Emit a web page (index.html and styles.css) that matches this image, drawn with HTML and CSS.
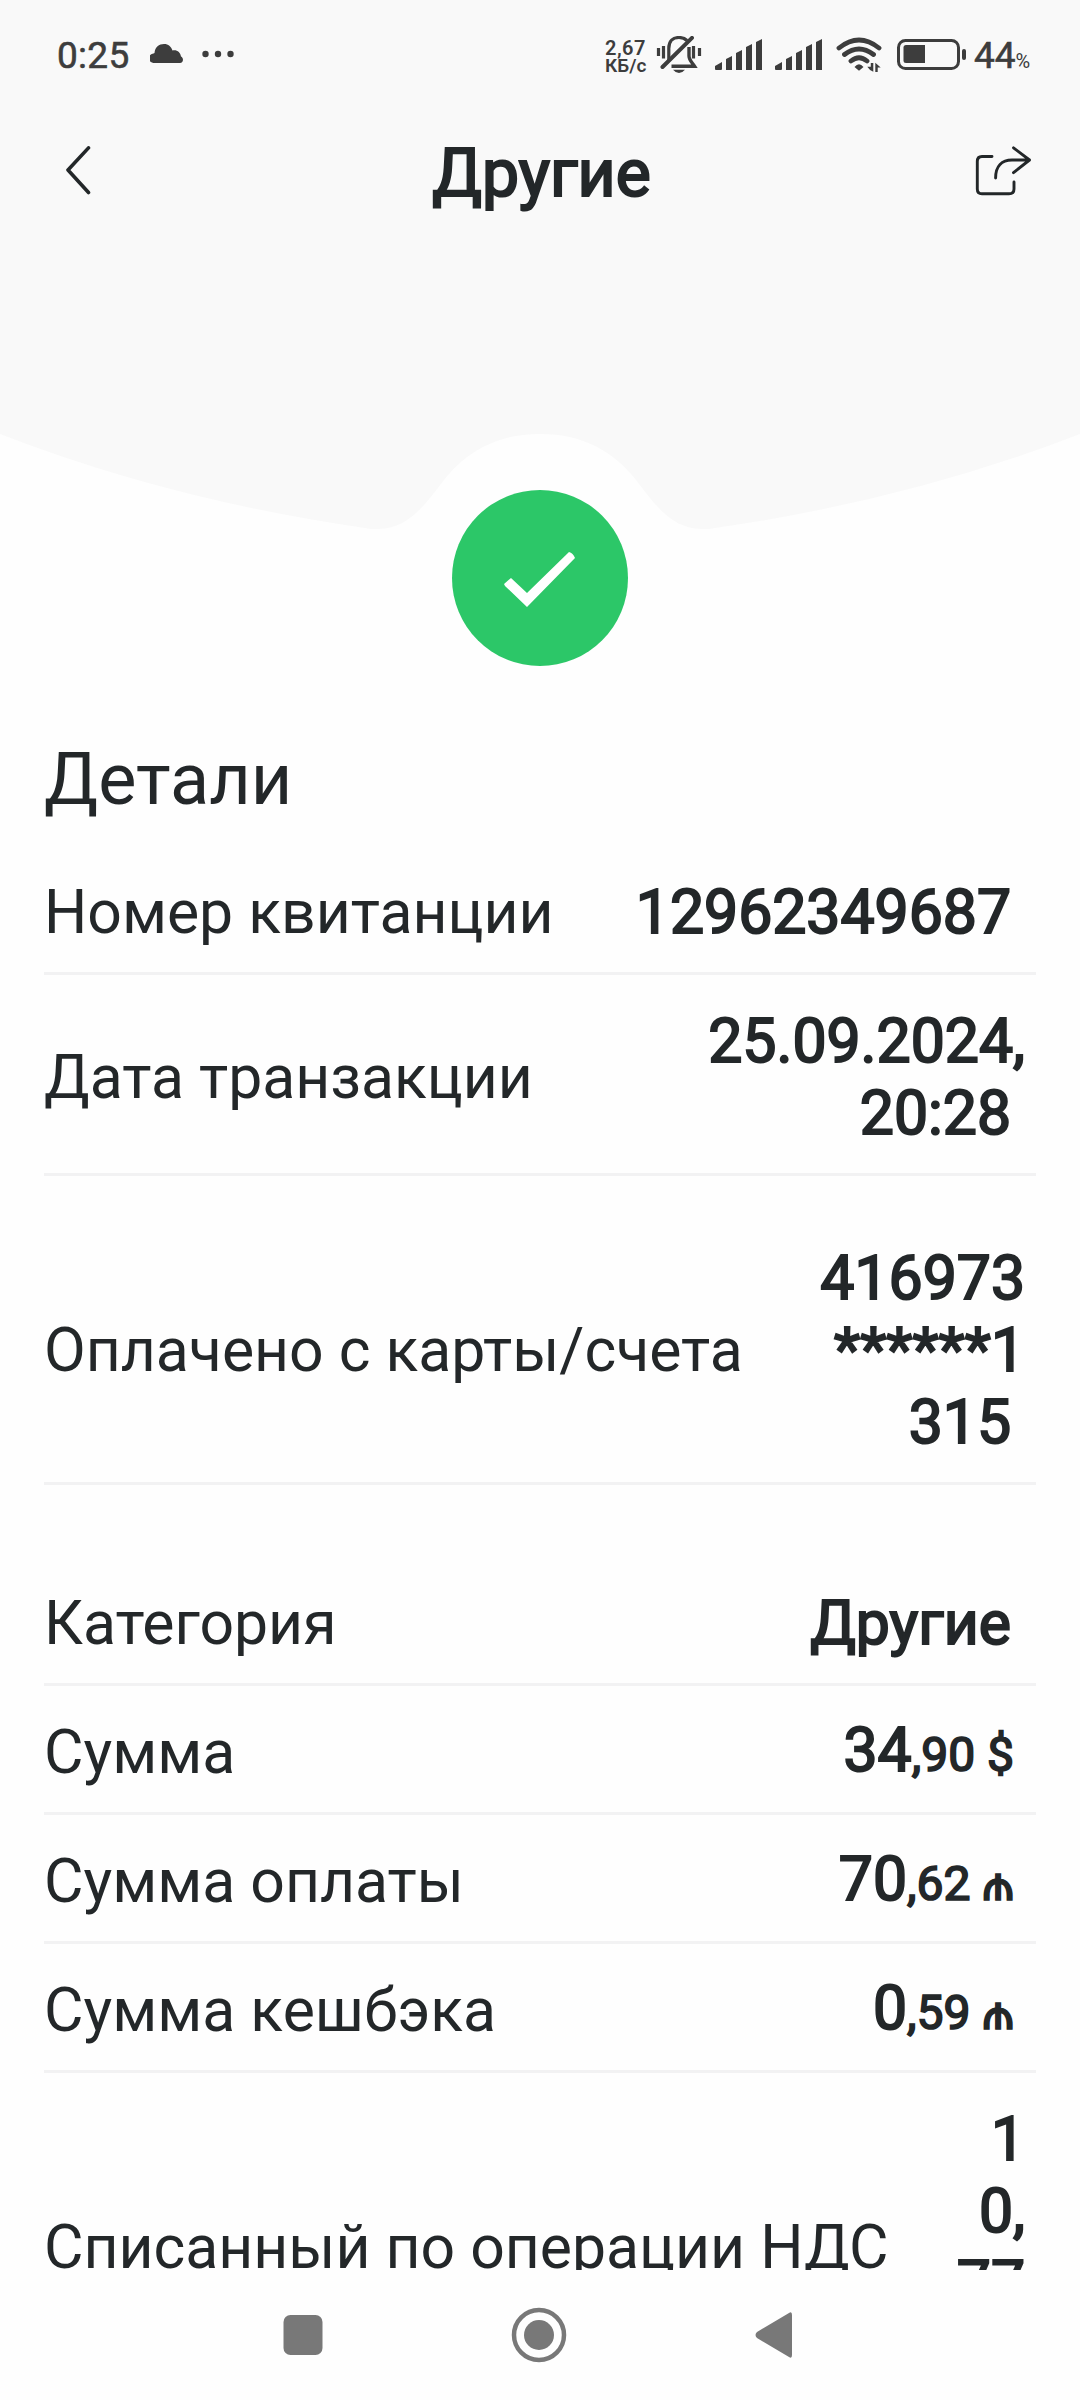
FILE: index.html
```html
<!DOCTYPE html>
<html lang="ru">
<head>
<meta charset="utf-8">
<title>Другие</title>
<link rel="stylesheet" href="styles.css">
</head>
<body>
<div class="screen">
  <header class="hero">
    <div class="status">
      <span class="clock">0:25</span>
      <svg class="cloud" width="33" height="19" viewBox="0 0 33 19"><path d="M4 19A4.500 4.500 0 0 1 3.500 9.500L4.500 9C5 3 9 0 14 0C18.500 0 21 2.500 22.500 6.500C27 5.500 30.500 8.500 31 12.500C34 14 33.500 19 30 19Z"/></svg>
      <svg class="dots" width="32" height="8" viewBox="0 0 32 8"><circle cx="3.500" cy="4" r="3.200"/><circle cx="16" cy="4" r="3.200"/><circle cx="28.500" cy="4" r="3.200"/></svg>
      <span class="speed"><span class="rate">2,67</span><span>КБ/с</span></span>
      <svg class="mute" width="46" height="40" viewBox="0 0 46 40">
        <g fill="none" stroke="#3d3d3d" stroke-width="3"><path d="M2.500 12v8M7.500 10v12.500M37.500 10v12.500M43.500 12v8M12.800 24V12.500C12.800 5 17 1.500 23 1.500C26 1.500 29 2.500 31 4.500" stroke-width="3.200"/><path d="M6.500 31L36 1.800" stroke-width="4" stroke-linecap="round"/><path d="M33 11V20C33 24 36 26.500 38.500 30.200H15.500" stroke-width="3.400"/></g>
        <path d="M17 33.700H29Q23 40.500 17 33.700Z"/>
      </svg>
      <svg class="signal" width="48" height="32" viewBox="0 0 48 32"><path id="bars" d="M0 30V27L7 23V30Q7 31 6 31H1Q0 31 0 30ZM11 31V20L17 17V31ZM21 31V14L27 11V31ZM31 31V8L37 5V31ZM41 31V3L47 0V31Z"/></svg>
      <svg class="signal" width="48" height="32" viewBox="0 0 48 32"><use href="#bars"/></svg>
      <svg class="wifi" width="46" height="37" viewBox="0 0 46 37">
        <g fill="none" stroke="#3d3d3d" stroke-width="4.800" stroke-linecap="round"><path d="M3 11Q23-5 43 11M8.500 17.500Q23 6.500 37.500 17.500M15 24Q23 17.500 31 24"/></g>
        <path d="M18.500 30Q23 24.500 27.500 30L23 33.800ZM31.300 29.800H34.800V26H37.300V34.800Q34 34 31.300 29.800ZM39.300 35V25.700L44.700 30.600H41.700V35Z"/>
      </svg>
      <svg class="battery" width="69" height="32" viewBox="0 0 69 32"><rect x="1.500" y="1.500" width="60" height="28" rx="7" fill="none" stroke="#3d3d3d" stroke-width="3"/><path d="M9 6H28V24H9Q6.500 24 6.500 21.500V8.500Q6.500 6 9 6Z"/><rect x="65" y="10" width="4" height="11" rx="2"/></svg>
      <span class="level">44<small>%</small></span>
    </div>
    <div class="toolbar">
      <svg class="back" width="28" height="50" viewBox="0 0 28 50"><path d="M24.500 1.900L4 24L24.500 46.500" fill="none" stroke="#232729" stroke-width="3.600" stroke-linecap="round" stroke-linejoin="round"/></svg>
      <h1 class="title">Другие</h1>
      <svg class="share" width="58" height="50" viewBox="0 0 58 50"><path d="M18 10.500H8Q3.300 10.500 3.300 15.500V43Q3.300 47.800 8 47.800H35Q40 47.800 40 43V36M21.600 32C21.600 20 28 14 38 14H55.500M39.500 1.800L55.500 14L39.500 26.700" fill="none" stroke="#232729" stroke-width="2.900" stroke-linecap="round" stroke-linejoin="round"/></svg>
    </div>
    <svg class="wave" width="1080" height="290" viewBox="0 40 1080 290"><path d="M0 40H1080V234Q910 300 715 328C711 329 708 329 702 329C672 329 655 305 636 280C614 252 584 234 540 234S466 252 444 280C425 305 408 329 378 329C372 329 369 329 365 328Q170 300 0 234Z"/></svg>
    <div class="badge"><svg width="72" height="56" viewBox="0 0 72 56"><path d="M0 32L7 26L23 41L65 0Q69 1 71 6L23 55L1 34Z" fill="#fff"/></svg></div>
  </header>
  <main class="details">
    <h2 class="heading">Детали</h2>
    <div class="row first"><span class="label">Номер квитанции</span><span class="value">12962349687</span></div>
    <div class="row date"><span class="label">Дата транзакции</span><span class="value"><span class="out">25.09.2024,</span><span>20:28</span></span></div>
    <div class="row card"><span class="label">Оплачено с карты/счета</span><span class="value"><span class="out">416973</span><span class="out">******1</span><span>315</span></span></div>
    <div class="row category"><span class="label">Категория</span><span class="value">Другие</span></div>
    <div class="row sum"><span class="label">Сумма</span><span class="money"><b>34</b>,90 $</span></div>
    <div class="row sum"><span class="label">Сумма оплаты</span><span class="money"><b>70</b>,62 ₼</span></div>
    <div class="row sum"><span class="label">Сумма кешбэка</span><span class="money"><b>0</b>,59 ₼</span></div>
    <div class="row vat"><span class="label">Списанный по операции НДС</span><span class="value"><span class="out">1</span><span class="out">0,</span><span class="out">77</span></span></div>
  </main>
  <nav class="nav">
    <svg width="40" height="56" viewBox="0 0 40 56"><rect x="0.500" y="8" width="39" height="40" rx="7"/></svg>
    <svg width="56" height="56" viewBox="0 0 56 56"><circle cx="28" cy="28" r="25" fill="none" stroke="#787878" stroke-width="4.500"/><circle cx="28" cy="28" r="15"/></svg>
    <svg width="38" height="56" viewBox="0 0 38 56"><path d="M34 6Q37 4 37 8V48Q37 52 34 50L2 31Q-1 28 2 25Z"/></svg>
  </nav>
</div>
</body>
</html>
```
FILE: styles.css
```css
* { box-sizing: border-box; }
body { margin: 0; background: #fff; color: #232729; font-family: Roboto, sans-serif; }
svg { display: block; flex: none; }
.screen { width: 1080px; height: 2400px; display: flex; flex-direction: column; overflow: hidden; background: #fefefe; }
.hero { height: 666px; flex: none; }
.status { height: 110px; background: #f9f9f9; color: #3d3d3d; fill: #3d3d3d; display: flex; align-items: flex-start; padding-left: 57px; }
.clock { font-size: 37px; line-height: 44px; margin-top: 34px; width: 93px; letter-spacing: .3px; -webkit-text-stroke: .6px; }
.cloud { margin-top: 44px; }
.dots { margin: 50px 0 0 19px; }
.speed { display: flex; flex-direction: column; width: 51px; margin: 39px 0 0 371px; font-size: 19px; line-height: 18px; font-weight: 600; white-space: nowrap; }
.rate { font-size: 20px; letter-spacing: .5px; }
.mute { margin-top: 36px; }
.signal { margin: 39px 0 0 13px; }
.signal + .signal { margin-left: 12px; }
.wifi { margin: 37px 0 0 13px; }
.battery { margin: 39px 0 0 15px; }
.level { font-size: 37px; line-height: 44px; margin: 34px 0 0 8px; white-space: nowrap; -webkit-text-stroke: .6px; }
.level small { font-size: 20px; -webkit-text-stroke: 0; }
.toolbar { height: 130px; background: #f9f9f9; display: flex; align-items: flex-start; justify-content: space-between; padding: 0 48px 0 64px; }
.back { margin: 36px 17px 0 0; }
.share { margin-top: 36px; }
.title { margin: 24px 0 0; font-size: 66px; line-height: 80px; font-weight: 400; -webkit-text-stroke: 2.2px; }
.wave { fill: #f9f9f9; }
.badge { width: 176px; height: 176px; margin: -40px auto 0; border-radius: 50%; background: #2cc768; display: flex; align-items: center; justify-content: center; }
.badge svg { margin-top: 3px; }
.details { height: 1604px; flex: none; overflow: hidden; padding: 0 44px; }
.heading { margin: 74px 0 0; font-size: 72px; line-height: 80px; font-weight: 400; }
.row { height: 129px; display: flex; align-items: center; justify-content: space-between; border-bottom: 3px solid #f2f2f3; padding: 7px 25px 0 0; white-space: nowrap; }
.label { font-size: 60.700px; line-height: 72px; }
.value, .money b { font-size: 60.700px; font-weight: 400; -webkit-text-stroke: 2px; }
.value { display: flex; flex-direction: column; align-items: flex-end; line-height: 72px; }
.out { margin-right: -14px; }
.money { font-size: 48px; font-weight: 400; line-height: 72px; -webkit-text-stroke: 1.700px; }
.first { margin-top: 26px; }
.date { height: 201px; }
.card { height: 309px; padding-top: 43px; }
.category { height: 201px; padding-top: 79px; }
.sum { padding: 8px 22px 0 0; }
.vat { height: 343px; border: 0; }
.vat .value { padding-bottom: 72px; }
.nav { flex: 1; display: flex; align-items: flex-start; padding: 37px 0 0 283px; fill: #787878; }
.nav svg + svg { margin-left: 188px; }
```
